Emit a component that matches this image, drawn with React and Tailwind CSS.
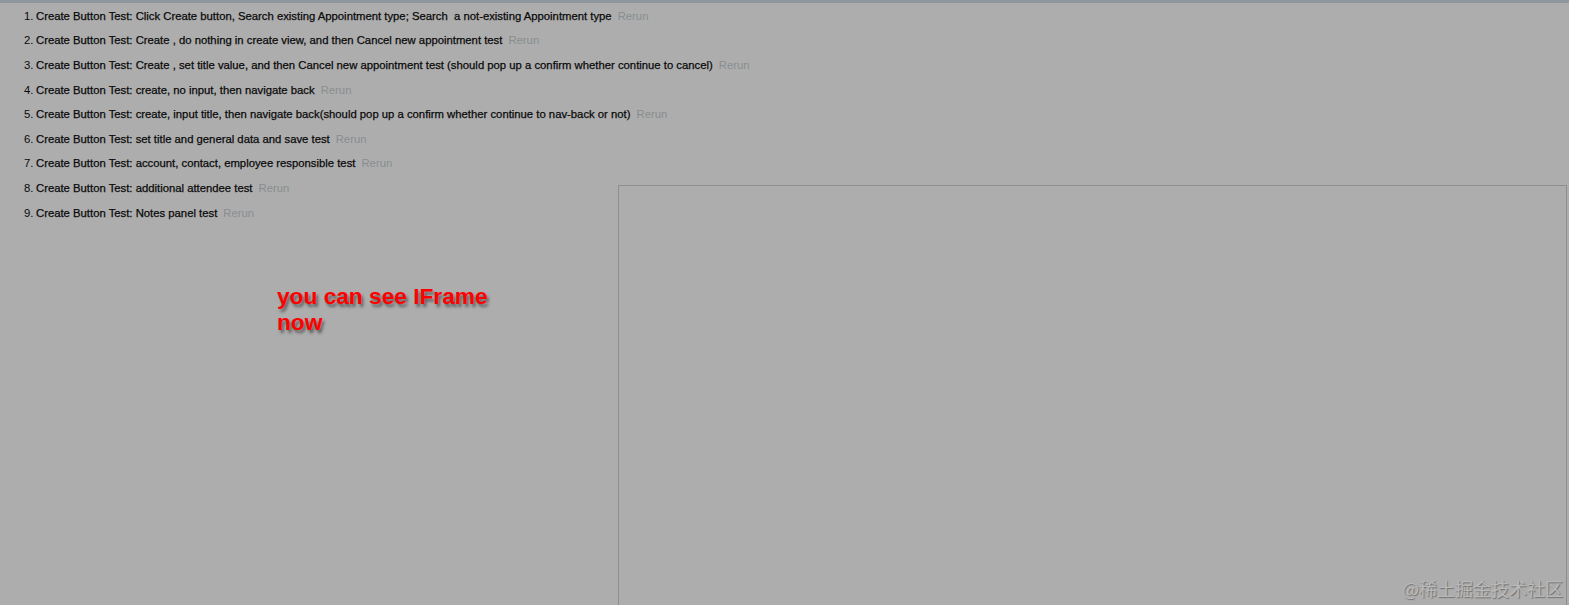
import React from 'react';

const tests = [
  'Create Button Test: Click Create button, Search existing Appointment type; Search  a not-existing Appointment type',
  'Create Button Test: Create , do nothing in create view, and then Cancel new appointment test',
  'Create Button Test: Create , set title value, and then Cancel new appointment test (should pop up a confirm whether continue to cancel)',
  'Create Button Test: create, no input, then navigate back',
  'Create Button Test: create, input title, then navigate back(should pop up a confirm whether continue to nav-back or not)',
  'Create Button Test: set title and general data and save test',
  'Create Button Test: account, contact, employee responsible test',
  'Create Button Test: additional attendee test',
  'Create Button Test: Notes panel test',
];

const App = () => {
  return (
    <div className="relative w-[1569px] h-[605px] overflow-hidden bg-[#adadad]">
      {/* top strip */}
      <div className="h-[3px] bg-[#8f979d]" />

      {/* test list */}
      <ol className="pt-[1px] pl-[24px] font-['Liberation_Sans',sans-serif] text-[11.3px] text-[#0a0a0a]">
        {tests.map((t, i) => (
          <li key={i} className="h-[24.6px] flex items-center whitespace-pre">
            <span className="w-[12px]">{i + 1}.</span>
            <span className="[-webkit-text-stroke:0.25px_#0a0a0a]">{t}</span>
            <span className="ml-[6px] text-[#888d90]">Rerun</span>
          </li>
        ))}
      </ol>

      {/* note */}
      <div className="mt-[58px] ml-[277px] w-[250px] font-['Liberation_Sans',sans-serif] font-bold text-[22.7px] leading-[26px] text-[#ff0000] [text-shadow:2px_3px_3px_rgba(0,0,0,0.45)]">
        you can see IFrame now
      </div>

      {/* iframe area */}
      <div className="absolute left-[618px] top-[185px] w-[949px] h-[430px] border border-[#8e8e8e]" />

      {/* watermark */}
      <div className="absolute right-[6px] bottom-[7px] font-['Noto_Sans_CJK_SC',sans-serif] text-[18px] leading-[20px] text-[#b9b9b9] [text-shadow:1px_1px_1px_rgba(0,0,0,0.35)]">
        @稀土掘金技术社区
      </div>
    </div>
  );
};

export default App;
